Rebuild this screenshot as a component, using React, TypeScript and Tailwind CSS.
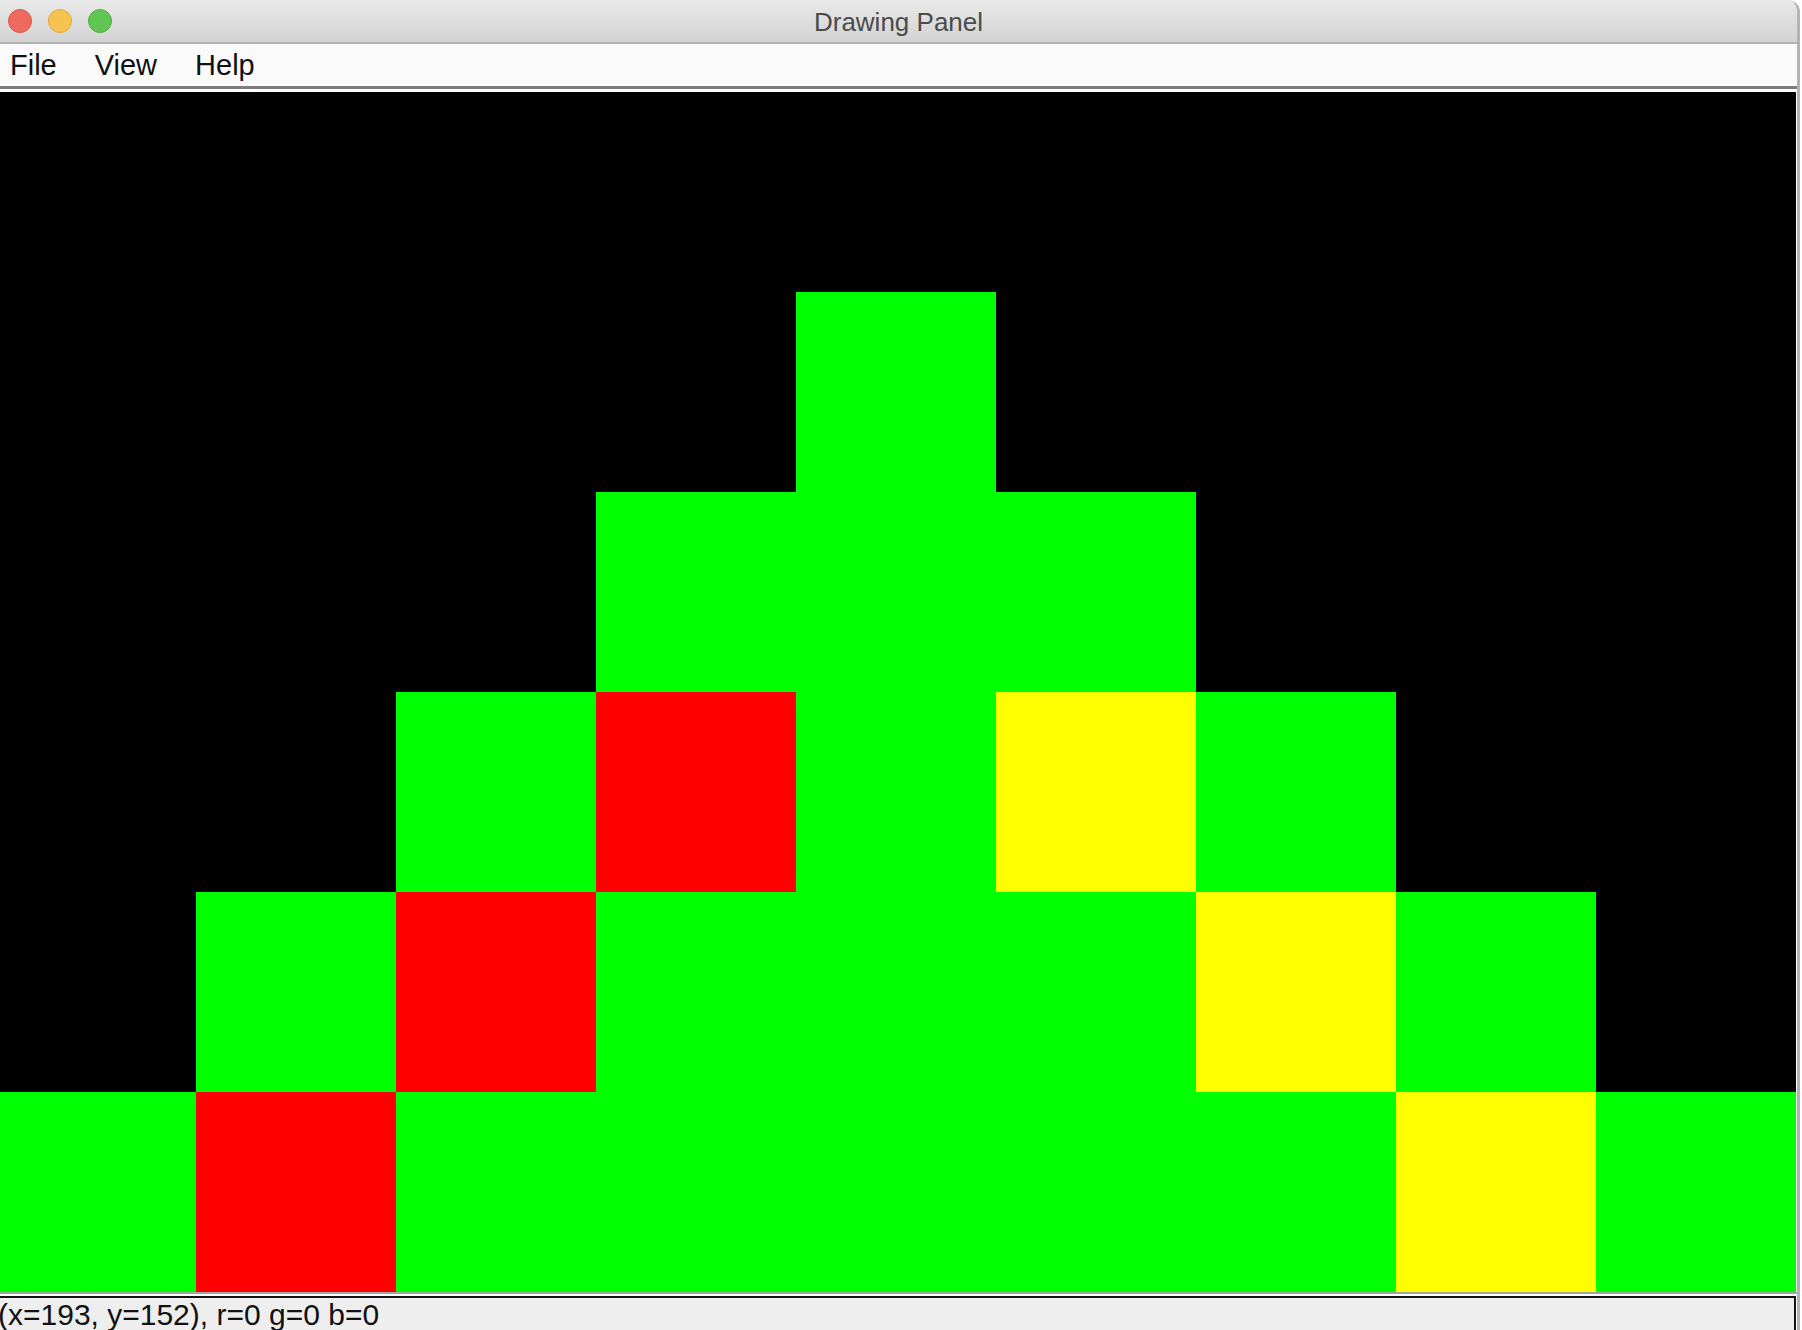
const K = "bg-[#000000]";
const G = "bg-[#00ff00]";
const R = "bg-[#ff0000]";
const Y = "bg-[#ffff00]";

// 6 rows x 9 columns, 200px cells
const CELLS = [
  [K, K, K, K, K, K, K, K, K],
  [K, K, K, K, G, K, K, K, K],
  [K, K, K, G, G, G, K, K, K],
  [K, K, G, R, G, Y, G, K, K],
  [K, G, R, G, G, G, Y, G, K],
  [G, R, G, G, G, G, G, Y, G],
];

function TrafficLights() {
  return (
    <div className="flex items-center gap-[16px] pl-[8px]">
      <span className="w-[24px] h-[24px] rounded-full bg-[#ee6a5f] border border-[#d8574c]" />
      <span className="w-[24px] h-[24px] rounded-full bg-[#f6c250] border border-[#dea93c]" />
      <span className="w-[24px] h-[24px] rounded-full bg-[#61c554] border border-[#4fae42]" />
    </div>
  );
}

export default function App() {
  return (
    <div className="w-[1802px] h-[1330px] overflow-hidden bg-white font-['Liberation_Sans',Arial,sans-serif]">
      <div className="w-[1800px] h-[1330px] flex flex-col rounded-tr-[12px] overflow-hidden border-r-[3px] border-[#b3b3b3]">
        {/* title bar */}
        <div className="relative h-[44px] shrink-0 flex items-center bg-gradient-to-b from-[#e9e9e9] to-[#d2d2d2] border-b-2 border-[#b1b1b1]">
          <TrafficLights />
          <div className="absolute inset-0 flex items-center justify-center pt-[3px] text-[26px] text-[#4b4b4b]">
            Drawing Panel
          </div>
        </div>

        {/* menu bar */}
        <div className="h-[45px] shrink-0 flex items-center gap-[38px] pl-[10px] pt-[2px] bg-[#fafafa] text-[29px] text-[#111] border-b-[3px] border-[#7d7d7d]">
          <span>File</span>
          <span>View</span>
          <span>Help</span>
        </div>

        {/* drawing canvas */}
        <div className="shrink-0 pt-[3px] pr-[1px] bg-white overflow-hidden">
          <div className="-ml-[4px] w-[1800px] grid grid-cols-9">
            {CELLS.flat().map((c, i) => (
              <div key={i} className={`h-[200px] ${c}`} />
            ))}
          </div>
        </div>

        {/* status bar */}
        <div className="border-t-2 border-[#a3a3a3] pt-[2px] bg-white flex-1">
          <div className="h-full bg-[#eeeeee] border-t-2 border-r-2 border-[#111] mr-[1px] text-[30px] leading-[34px] text-[#111] whitespace-nowrap -ml-[2px] overflow-hidden">
            (x=193, y=152), r=0 g=0 b=0
          </div>
        </div>
      </div>
    </div>
  );
}
